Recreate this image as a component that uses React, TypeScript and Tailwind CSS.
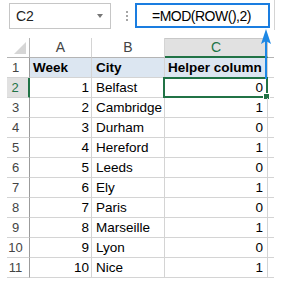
import React from "react";

const rows: [number, string, number][] = [
  [1, "Belfast", 0],
  [2, "Cambridge", 1],
  [3, "Durham", 0],
  [4, "Hereford", 1],
  [5, "Leeds", 0],
  [6, "Ely", 1],
  [7, "Paris", 0],
  [8, "Marseille", 1],
  [9, "Lyon", 0],
  [10, "Nice", 1],
];

export default function App() {
  return (
    <div className="relative w-[287px] h-[297px] bg-white overflow-hidden font-['Liberation_Sans',Arial,sans-serif] text-black">
      {/* Top bar */}
      <div className="flex h-[38px] pl-[9px]">
        <div className="mt-[3px] w-[102px] h-[26px] border border-[#c6c6c6] flex items-center justify-between pl-[6px] pr-[7px]">
          <span className="text-[14px] text-[#222] leading-none">C2</span>
          <span className="w-0 h-0 border-l-[3px] border-r-[3px] border-t-[4px] border-l-transparent border-r-transparent border-t-[#767676]" />
        </div>
        <div className="mt-[3px] w-[24px] h-[26px] flex flex-col items-center justify-center gap-[2px] pl-[7px]">
          <span className="w-[2px] h-[2px] bg-[#a6a6a6]" />
          <span className="w-[2px] h-[2px] bg-[#a6a6a6]" />
          <span className="w-[2px] h-[2px] bg-[#a6a6a6]" />
        </div>
        <div className="mt-[3px] w-[135px] h-[25px] border-2 border-[#1a7de0] flex items-center pl-[15px]">
          <span className="text-[14px] tracking-[-0.5px] leading-none">=MOD(ROW(),2)</span>
        </div>
        <div className="ml-[4px] w-px h-[30px] bg-[#d4d4d4]" />
      </div>

      {/* Grid */}
      <div className="flex flex-col pl-[7px]">
        {/* Header row */}
        <div className="flex h-[20px] text-[14px] text-[#444] leading-[19px]">
          <div className="relative w-[23px] border-r border-b border-[#b4b4b4]">
            <div className="absolute right-[3px] bottom-[3px] w-0 h-0 [border-bottom:12px_solid_#d6d6d6] [border-left:12px_solid_transparent]" />
          </div>
          <div className="w-[62px] border-r border-b border-r-[#d4d4d4] border-b-[#b4b4b4] text-center">A</div>
          <div className="w-[73px] border-r border-b border-r-[#d4d4d4] border-b-[#b4b4b4] text-center">B</div>
          <div className="w-[103px] bg-[#e1e1e1] border-t border-t-[#c8c8c8] border-b-2 border-b-[#217346] text-center text-[#217346] leading-[17px] border-r border-r-[#c8c8c8]">C</div>
          <div className="w-[6px] border-b border-[#b4b4b4]" />
        </div>

        {/* Row 1 */}
        <div className="flex h-[20px] text-[13.5px] leading-[19px]">
          <div className="w-[23px] border-r border-b border-r-[#9b9b9b] border-b-[#d4d4d4] text-center pr-[5px] text-[13px] text-[#444]">1</div>
          <div className="w-[62px] bg-[#dce6f1] border-r border-b border-[#d4d4d4] pl-[3px] font-bold">Week</div>
          <div className="w-[73px] bg-[#dce6f1] border-r border-b border-[#d4d4d4] pl-[4px] font-bold">City</div>
          <div className="w-[103px] bg-[#dce6f1] border-r border-b border-[#d4d4d4] pl-[3px] font-bold whitespace-nowrap">Helper column</div>
          <div className="w-[6px] border-b border-[#d4d4d4]" />
        </div>

        {rows.map(([w, city, h], i) => {
          const sel = i === 0;
          return (
            <div key={i} className="flex h-[20px] text-[13.5px] leading-[19px]">
              {sel ? (
                <div className="w-[23px] bg-[#e1e1e1] border-r-2 border-b border-r-[#217346] border-b-[#d4d4d4] text-center pr-[5px] text-[13px] text-[#217346]">
                  {i + 2}
                </div>
              ) : (
                <div className="w-[23px] border-r border-b border-r-[#9b9b9b] border-b-[#d4d4d4] text-center pr-[5px] text-[13px] text-[#444]">
                  {i + 2}
                </div>
              )}
              <div className="w-[62px] border-r border-b border-[#d4d4d4] text-right pr-[2px]">{w}</div>
              <div className="w-[73px] border-r border-b border-[#d4d4d4] pl-[4px] whitespace-nowrap overflow-hidden">{city}</div>
              <div className="relative w-[103px] border-r border-b border-[#d4d4d4] text-right pr-[4px]">
                {h}
                {sel && (
                  <>
                    <div className="absolute -left-[2px] -top-[1px] w-[105px] h-[21px] border-2 border-[#217346]" />
                    <div className="absolute left-[98px] top-[15px] w-[7px] h-[7px] bg-[#217346] border border-white" />
                  </>
                )}
              </div>
              <div className="w-[6px] border-b border-[#d4d4d4]" />
            </div>
          );
        })}
      </div>

      {/* Arrow overlay */}
      <svg className="absolute left-[260px] top-[28px]" width="12" height="51" viewBox="0 0 12 51">
        <path d="M6 1 L11 16 L6 13 L1 16 Z" fill="#1e88e5" />
        <rect x="5" y="12" width="2" height="39" fill="#1e88e5" />
      </svg>
    </div>
  );
}
